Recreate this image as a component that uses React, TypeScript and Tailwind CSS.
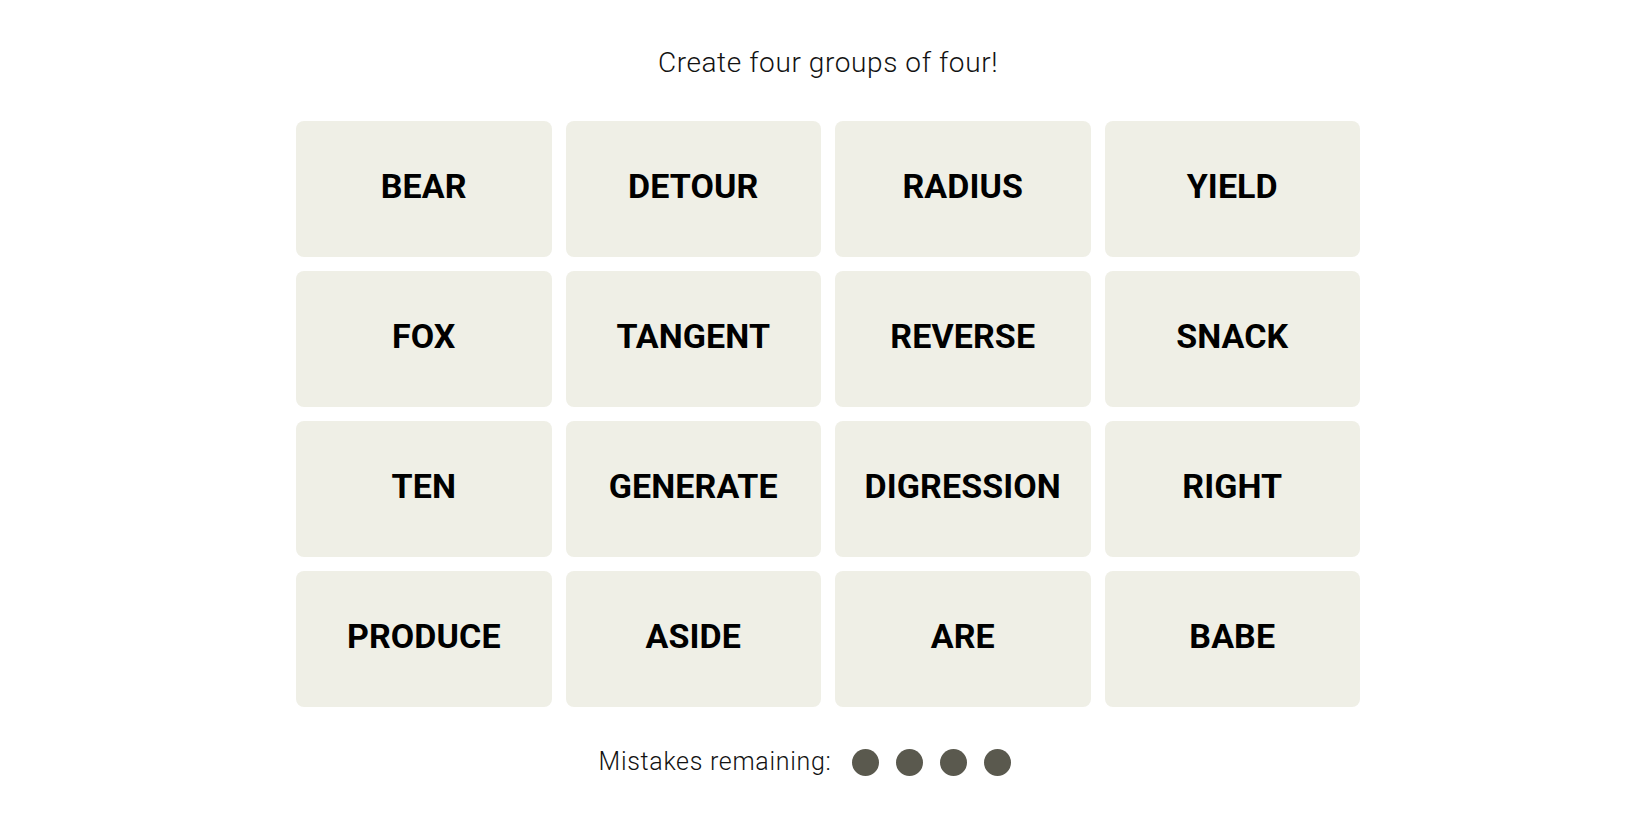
import React from 'react';

const WORDS: string[] = [
  'BEAR', 'DETOUR', 'RADIUS', 'YIELD',
  'FOX', 'TANGENT', 'REVERSE', 'SNACK',
  'TEN', 'GENERATE', 'DIGRESSION', 'RIGHT',
  'PRODUCE', 'ASIDE', 'ARE', 'BABE',
];

const MISTAKES_LEFT = 4;

export default function App() {
  return (
    <div className="min-h-screen w-full bg-white pl-[6px] pt-[45px] font-['Roboto',sans-serif]">
      <div className="mx-auto flex w-[1064px] flex-col items-center">
        <h2 className="text-[28px] font-light leading-[36px] tracking-[0.6px] text-[#121212]">
          Create four groups of four!
        </h2>

        <div className="mt-[40px] grid w-full grid-cols-4 gap-[14px]">
          {WORDS.map(word => (
            <button
              key={word}
              className="flex h-[136px] items-center justify-center rounded-[8px] bg-[#efefe6] pb-[5px] text-[34px] font-bold tracking-[0.1px] text-black"
            >
              {word}
            </button>
          ))}
        </div>

        <div className="mt-[41px] flex h-[28px] w-full items-center justify-center pr-[46px]">
          <span className="text-[25px] font-light leading-[28px] tracking-[0.7px] text-[#121212]">
            Mistakes remaining:
          </span>
          <div className="ml-[21px] flex gap-[17px]">
            {Array.from({ length: MISTAKES_LEFT }).map((_, i) => (
              <span key={i} className="h-[27px] w-[27px] rounded-full bg-[#5a594e]" />
            ))}
          </div>
        </div>
      </div>
    </div>
  );
}
